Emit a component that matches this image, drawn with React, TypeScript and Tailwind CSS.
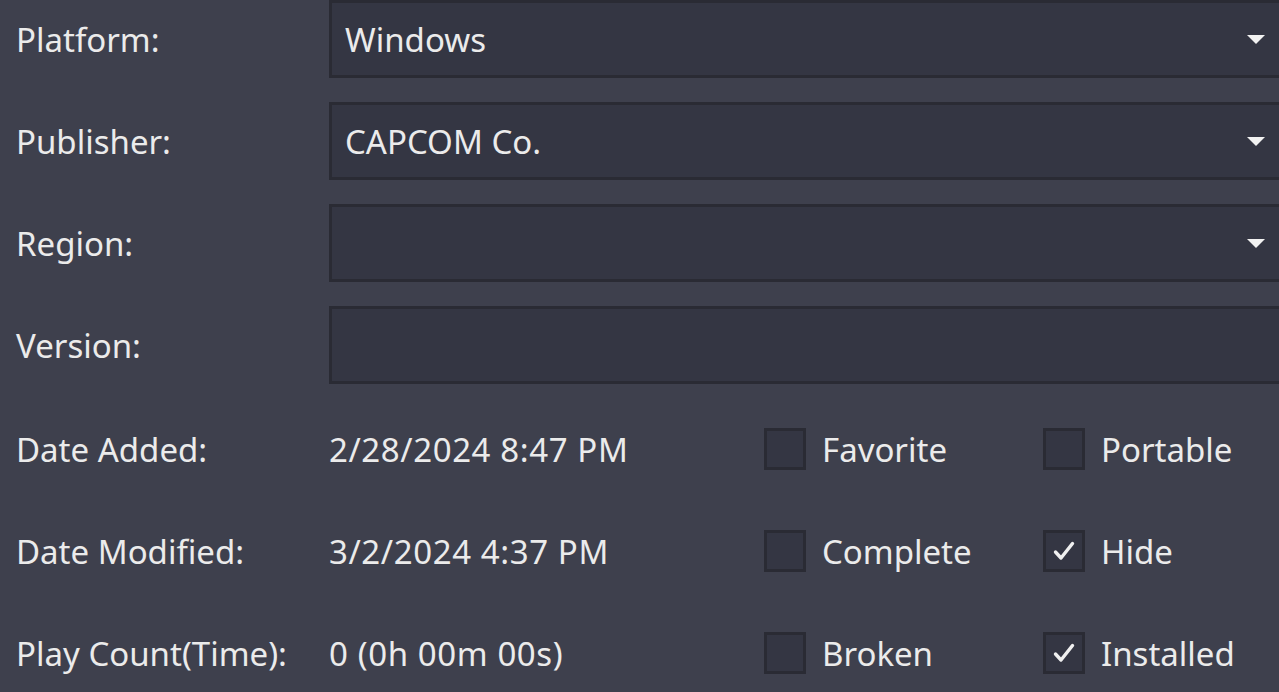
import React from "react";

const font = { fontFamily: '"Noto Sans", "Open Sans", sans-serif' };

function Arrow() {
  return (
    <svg width="18" height="9" viewBox="0 0 18 9" className="shrink-0">
      <path d="M0 0 L18 0 L9 9 Z" fill="#f2f2f2" />
    </svg>
  );
}

function Field({ label, value, dropdown }: { label: string; value?: string; dropdown?: boolean }) {
  return (
    <div className="flex items-center h-[78px]">
      <div className="w-[329px] shrink-0 pl-[16px]">{label}</div>
      <div className="flex-1 h-[78px] border-[3px] border-r-0 border-[#2a2b34] bg-[#343643] flex items-center pl-[13px] pr-[14px]">
        <div className="flex-1">{value}</div>
        {dropdown && <Arrow />}
      </div>
    </div>
  );
}

function Check({ label, checked }: { label: string; checked?: boolean }) {
  return (
    <div className="flex items-center">
      <div className="w-[42px] h-[42px] border-[3px] border-[#2a2b34] bg-[#343643] flex items-center justify-center shrink-0">
        {checked && (
          <svg width="22" height="20" viewBox="0 0 22 20">
            <path d="M2.5 11 L8 17 L19.5 2.5" fill="none" stroke="#f0f0f0" strokeWidth="3.4" strokeLinecap="round" strokeLinejoin="round" />
          </svg>
        )}
      </div>
      <div className="ml-[16px]">{label}</div>
    </div>
  );
}

function InfoRow({ label, value, c1, c2 }: { label: string; value: string; c1: React.ReactNode; c2: React.ReactNode }) {
  return (
    <div className="flex items-center h-[102px]">
      <div className="w-[329px] shrink-0 pl-[16px]">{label}</div>
      <div className="w-[435px] shrink-0 tracking-[0.6px]">{value}</div>
      <div className="w-[279px] shrink-0">{c1}</div>
      <div className="flex-1">{c2}</div>
    </div>
  );
}

export default function App() {
  return (
    <div className="w-[1279px] h-[692px] overflow-hidden bg-[#3e404d] text-[#ebebeb] text-[33px] leading-none" style={font}>
      <div className="flex flex-col gap-[24px]">
        <Field label="Platform:" value="Windows" dropdown />
        <Field label="Publisher:" value="CAPCOM Co." dropdown />
        <Field label="Region:" value="" dropdown />
        <Field label="Version:" value="" />
      </div>
      <div className="mt-[14px] flex flex-col">
        <InfoRow label="Date Added:" value="2/28/2024 8:47 PM" c1={<Check label="Favorite" />} c2={<Check label="Portable" />} />
        <InfoRow label="Date Modified:" value="3/2/2024 4:37 PM" c1={<Check label="Complete" />} c2={<Check label="Hide" checked />} />
        <InfoRow label="Play Count(Time):" value="0 (0h 00m 00s)" c1={<Check label="Broken" />} c2={<Check label="Installed" checked />} />
      </div>
    </div>
  );
}
